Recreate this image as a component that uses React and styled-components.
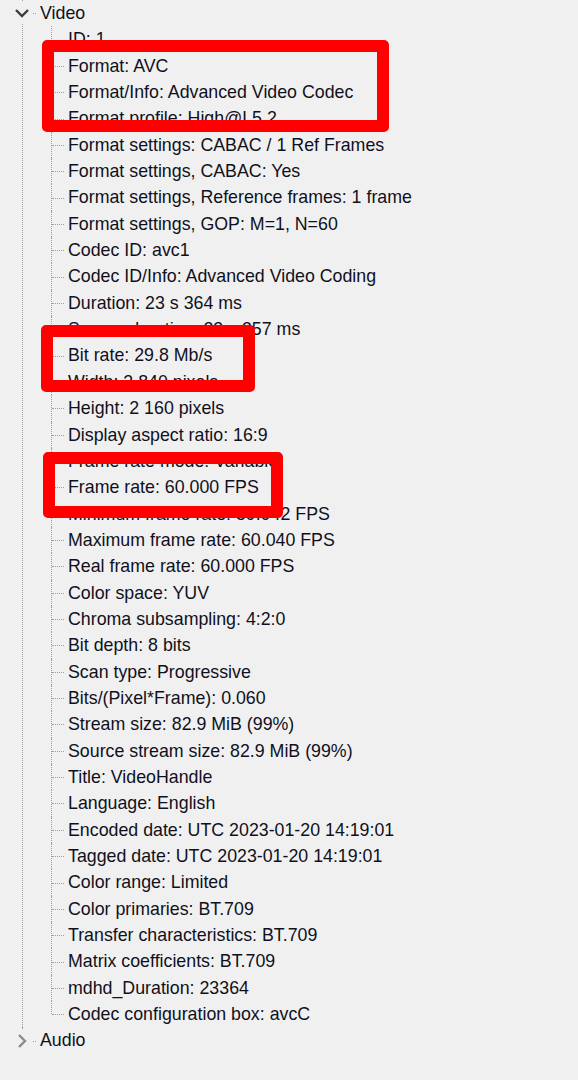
import React from 'react'
import styled, { createGlobalStyle } from 'styled-components'

const ROW = 26.35
const LINE = '#a0a0a0'

const GlobalStyle = createGlobalStyle`
  html, body {
    margin: 0;
    padding: 0;
    background: #f0f0f0;
  }
`

const Page = styled.div`
  position: relative;
  width: 578px;
  height: 1080px;
  overflow: hidden;
  background: #f0f0f0;
  font-family: 'Liberation Sans', Arial, sans-serif;
  font-size: 17.8px;
  color: #10101c;
`

const TreeList = styled.div`
  display: flex;
  flex-direction: column;
`

const RootNode = styled.div`
  position: relative;

  &::before {
    content: '';
    position: absolute;
    left: 22px;
    top: 0;
    height: ${(p) => (p.$last ? `${ROW / 2}px` : '100%')};
    border-left: 1px dotted ${LINE};
  }
`

const RootRow = styled.div`
  position: relative;
  display: flex;
  align-items: center;
  height: ${ROW}px;

  &::after {
    content: '';
    position: absolute;
    left: 22px;
    width: 14px;
    top: 50%;
    border-top: 1px dotted ${LINE};
  }
`

const Expander = styled.span`
  position: relative;
  z-index: 1;
  display: flex;
  align-items: center;
  justify-content: center;
  width: 22px;
  height: 22px;
  margin-left: 11px;
  background: #f0f0f0;
`

const Label = styled.span`
  position: relative;
  z-index: 1;
  white-space: nowrap;
  margin-left: ${(p) => p.$indent}px;
  line-height: ${ROW}px;
`

const Children = styled.div`
  display: flex;
  flex-direction: column;
`

const ChildRow = styled.div`
  position: relative;
  display: flex;
  align-items: center;
  height: ${ROW}px;

  &::before {
    content: '';
    position: absolute;
    left: 51px;
    top: 0;
    height: ${(p) => (p.$last ? '50%' : '100%')};
    border-left: 1px dotted ${LINE};
  }

  &::after {
    content: '';
    position: absolute;
    left: 52px;
    width: 12px;
    top: 50%;
    border-top: 1px dotted ${LINE};
  }
`

const Highlight = styled.div`
  position: absolute;
  box-sizing: border-box;
  left: ${(p) => p.$x}px;
  top: ${(p) => p.$y}px;
  width: ${(p) => p.$w}px;
  height: ${(p) => p.$h}px;
  border: 12px solid #ff0000;
  border-radius: 5px;
  z-index: 5;
`

const videoFields = [
  'ID: 1',
  'Format: AVC',
  'Format/Info: Advanced Video Codec',
  'Format profile: High@L5.2',
  'Format settings: CABAC / 1 Ref Frames',
  'Format settings, CABAC: Yes',
  'Format settings, Reference frames: 1 frame',
  'Format settings, GOP: M=1, N=60',
  'Codec ID: avc1',
  'Codec ID/Info: Advanced Video Coding',
  'Duration: 23 s 364 ms',
  'Source duration: 23 s 357 ms',
  'Bit rate: 29.8 Mb/s',
  'Width: 3 840 pixels',
  'Height: 2 160 pixels',
  'Display aspect ratio: 16:9',
  'Frame rate mode: Variable',
  'Frame rate: 60.000 FPS',
  'Minimum frame rate: 59.942 FPS',
  'Maximum frame rate: 60.040 FPS',
  'Real frame rate: 60.000 FPS',
  'Color space: YUV',
  'Chroma subsampling: 4:2:0',
  'Bit depth: 8 bits',
  'Scan type: Progressive',
  'Bits/(Pixel*Frame): 0.060',
  'Stream size: 82.9 MiB (99%)',
  'Source stream size: 82.9 MiB (99%)',
  'Title: VideoHandle',
  'Language: English',
  'Encoded date: UTC 2023-01-20 14:19:01',
  'Tagged date: UTC 2023-01-20 14:19:01',
  'Color range: Limited',
  'Color primaries: BT.709',
  'Transfer characteristics: BT.709',
  'Matrix coefficients: BT.709',
  'mdhd_Duration: 23364',
  'Codec configuration box: avcC',
]

const highlights = [
  { x: 42, y: 40, w: 347, h: 92 },
  { x: 41, y: 325, w: 214, h: 67 },
  { x: 43, y: 452, w: 240, h: 66 },
]

function Chevron({ open }) {
  return (
    <svg width="16" height="16" viewBox="0 0 16 16">
      {open ? (
        <polyline points="2,5 8,11 14,5" fill="none" stroke="#3c3c3c" strokeWidth="2.4" />
      ) : (
        <polyline points="5,2 11,8 5,14" fill="none" stroke="#8c8c8c" strokeWidth="2.4" />
      )}
    </svg>
  )
}

function StreamNode({ title, fields, open, last }) {
  return (
    <RootNode $last={last}>
      <RootRow>
        <Expander>
          <Chevron open={open} />
        </Expander>
        <Label $indent={7}>{title}</Label>
      </RootRow>
      {open && (
        <Children>
          {fields.map((f, i) => (
            <ChildRow key={f} $last={i === fields.length - 1}>
              <Label $indent={68}>{f}</Label>
            </ChildRow>
          ))}
        </Children>
      )}
    </RootNode>
  )
}

export default function App() {
  return (
    <Page>
      <GlobalStyle />
      <TreeList>
        <StreamNode title="Video" fields={videoFields} open />
        <StreamNode title="Audio" fields={[]} last />
      </TreeList>
      {highlights.map((h, i) => (
        <Highlight key={i} $x={h.x} $y={h.y} $w={h.w} $h={h.h} />
      ))}
    </Page>
  )
}
